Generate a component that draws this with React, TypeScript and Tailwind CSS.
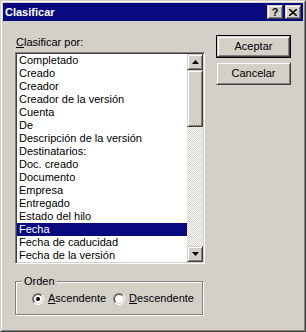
import React, { useState } from 'react';

const items = [
  'Completado',
  'Creado',
  'Creador',
  'Creador de la versión',
  'Cuenta',
  'De',
  'Descripción de la versión',
  'Destinatarios:',
  'Doc. creado',
  'Documento',
  'Empresa',
  'Entregado',
  'Estado del hilo',
  'Fecha',
  'Fecha de caducidad',
  'Fecha de la versión',
];

// classic 3D bevels
const raised =
  'border border-t-[#d4d0c8] border-l-[#d4d0c8] border-r-[#404040] border-b-[#404040] shadow-[inset_1px_1px_0_#fff,inset_-1px_-1px_0_#808080] bg-[#d4d0c8]';
const sunken =
  'border border-t-[#808080] border-l-[#808080] border-r-white border-b-white shadow-[inset_1px_1px_0_#404040,inset_-1px_-1px_0_#d4d0c8]';

const Arrow = ({ down }: { down?: boolean }) => (
  <svg width="7" height="4" viewBox="0 0 7 4">
    {down ? <polygon points="0,0 7,0 3.5,4" fill="#000" /> : <polygon points="3.5,0 7,4 0,4" fill="#000" />}
  </svg>
);

const Radio = ({ checked }: { checked?: boolean }) => (
  <span className="w-[12px] h-[12px] rounded-full border border-t-[#808080] border-l-[#808080] border-r-white border-b-white flex items-center justify-center">
    <span className="w-[10px] h-[10px] rounded-full bg-white border border-t-[#404040] border-l-[#404040] border-r-[#d4d0c8] border-b-[#d4d0c8] flex items-center justify-center">
      {checked && <span className="w-[4px] h-[4px] rounded-full bg-black"></span>}
    </span>
  </span>
);

export default function App() {
  const [selected, setSelected] = useState('Fecha');
  const [order, setOrder] = useState('asc');

  return (
    <div
      className="w-[306px] h-[332px] bg-[#d4d0c8] border border-t-[#d4d0c8] border-l-[#d4d0c8] border-r-[#404040] border-b-[#404040] text-[11px] text-black overflow-hidden"
      style={{ fontFamily: '"Liberation Sans", Arial, sans-serif' }}
    >
      <div className="h-full border border-t-white border-l-white border-r-[#808080] border-b-[#808080] p-px flex flex-col">
        {/* Title bar */}
        <div className="h-[18px] bg-[#0a0a80] flex items-center justify-between pl-[2px] pr-[2px]">
          <span className="text-white font-bold text-[11px] leading-none">Clasificar</span>
          <div className="flex items-center gap-[2px]">
            <button className={`${raised} w-[16px] h-[14px] flex items-center justify-center font-bold text-[11px] leading-none`}>?</button>
            <button className={`${raised} w-[16px] h-[14px] flex items-center justify-center`}>
              <svg width="8" height="7" viewBox="0 0 8 7">
                <path d="M0 0 L8 7 M8 0 L0 7" stroke="#000" strokeWidth="1.6" />
              </svg>
            </button>
          </div>
        </div>

        {/* Body */}
        <div className="flex items-start pl-[12px]">
          <div className="flex flex-col pt-[15px]">
            <label className="h-[13px] leading-[13px] pl-px">
              <span className="underline">C</span>lasificar por:
            </label>
            <div className={`${sunken} mt-[3px] w-[190px] h-[212px] bg-white p-px flex`}>
              <ul className="w-[170px] h-[208px] overflow-hidden">
                {items.map((it) => (
                  <li
                    key={it}
                    onClick={() => setSelected(it)}
                    className={`h-[13px] leading-[11px] pl-px whitespace-nowrap border border-transparent ${
                      selected === it ? 'bg-[#0a0a80] text-white border-dotted border-[#e8d870]' : ''
                    }`}
                  >
                    {it}
                  </li>
                ))}
              </ul>
              <div className="w-[16px] h-[208px] flex flex-col bg-[repeating-conic-gradient(#d4d0c8_0_25%,#fff_0_50%)] bg-[length:2px_2px]">
                <div className={`${raised} h-[16px] flex items-center justify-center`}>
                  <Arrow />
                </div>
                <div className={`${raised} h-[57px]`}></div>
                <div className="flex-1"></div>
                <div className={`${raised} h-[16px] flex items-center justify-center`}>
                  <Arrow down />
                </div>
              </div>
            </div>

            <fieldset className="mt-[11px] w-[188px] border border-[#808080] shadow-[1px_1px_0_#fff,inset_1px_1px_0_#fff] pl-[16px] pt-[4px] pb-[9px]">
              <legend className="ml-[-10px] px-[2px] h-[13px] leading-[13px] bg-[#d4d0c8]">Orden</legend>
              <div className="flex items-center h-[13px]">
                <button className="flex items-center" onClick={() => setOrder('asc')}>
                  <Radio checked={order === 'asc'} />
                  <span className="ml-[4px] leading-[13px]">
                    <span className="underline">A</span>scendente
                  </span>
                </button>
                <button className="flex items-center ml-[7px]" onClick={() => setOrder('desc')}>
                  <Radio checked={order === 'desc'} />
                  <span className="ml-[4px] leading-[13px]">
                    <span className="underline">D</span>escendente
                  </span>
                </button>
              </div>
            </fieldset>
          </div>

          <div className="flex flex-col pt-[14px] ml-[11px] gap-[4px]">
            <div className="border border-black">
              <button className={`${raised} w-[73px] h-[21px] flex items-center justify-center`}>Aceptar</button>
            </div>
            <button className={`${raised} w-[75px] h-[23px] flex items-center justify-center`}>Cancelar</button>
          </div>
        </div>
      </div>
    </div>
  );
}
